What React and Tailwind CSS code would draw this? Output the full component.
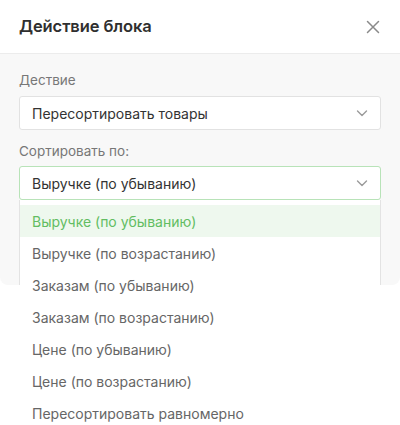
const options = [
  "Выручке (по убыванию)",
  "Выручке (по возрастанию)",
  "Заказам (по убыванию)",
  "Заказам (по возрастанию)",
  "Цене (по убыванию)",
  "Цене (по возрастанию)",
  "Пересортировать равномерно",
];

function Chevron() {
  return (
    <svg width="14" height="14" viewBox="0 0 14 14" fill="none" className="text-[#9a9a9a]">
      <path d="M2.5 5l4.5 4.5L11.5 5" stroke="currentColor" strokeWidth="1.4" strokeLinecap="round" strokeLinejoin="round" />
    </svg>
  );
}

function SelectBox({ value, active }) {
  return (
    <div
      className={`h-[34px] bg-white rounded-[3px] border flex items-center justify-between pl-[12px] pr-[11px] text-[14px] text-[#333] ${
        active ? "border-[#b8e3b8]" : "border-[#e2e2e2]"
      }`}
    >
      <span>{value}</span>
      <Chevron />
    </div>
  );
}

export default function App() {
  return (
    <div className="w-[400px] h-[425px] bg-white font-['Inter',sans-serif] overflow-hidden">
      <div className="h-[54px] flex items-center justify-between pl-[19px] pr-[19px] border-b border-[#ececec]">
        <h2 className="text-[16.5px] font-semibold text-[#2f2f2f] tracking-[-0.1px]">Действие блока</h2>
        <svg width="14" height="14" viewBox="0 0 14 14" className="text-[#8a8a8a] mr-[1px]">
          <path d="M1.5 1.5l11 11M12.5 1.5l-11 11" stroke="currentColor" strokeWidth="1.5" strokeLinecap="round" />
        </svg>
      </div>
      <div className="relative bg-[#f8f8f8] h-[231px] rounded-b-[8px] px-[19px] pt-[17px]">
        <div className="text-[13.5px] text-[#777] leading-[18px] mb-[7px]">Дествие</div>
        <SelectBox value="Пересортировать товары" />
        <div className="text-[13.5px] text-[#777] leading-[18px] mt-[12px] mb-[6px]">Сортировать по:</div>
        <SelectBox value="Выручке (по убыванию)" active />

        <div className="absolute left-[19px] right-[19px] top-[146px] bg-white pt-[5px]">
          <div className="absolute inset-x-0 top-0 h-[85px] border-x border-[#e3e3e3] pointer-events-none" />
          {options.map((o, i) => (
            <div
              key={o}
              className={`h-[32px] flex items-center pl-[13px] text-[14px] ${
                i === 0 ? "bg-[#eef8ee] text-[#62bd62]" : "text-[#666]"
              }`}
            >
              {o}
            </div>
          ))}
        </div>
      </div>
    </div>
  );
}
